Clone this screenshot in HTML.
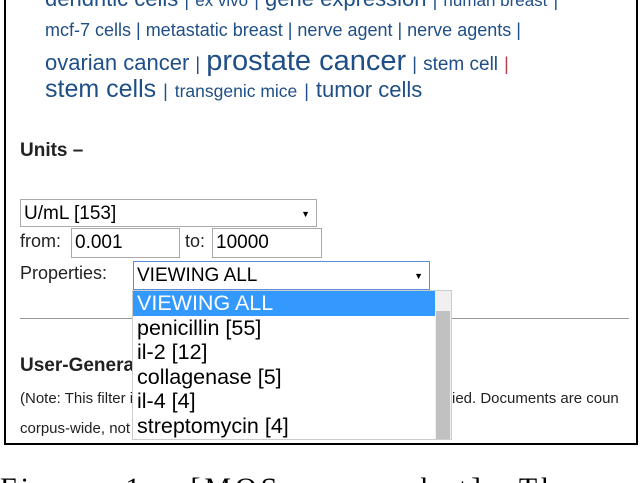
<!DOCTYPE html>
<html><head><meta charset="utf-8"><style>
body{margin:0;width:640px;height:483px;overflow:hidden;background:#fff;position:relative;font-family:"Liberation Sans",Arial,sans-serif}
.a{position:absolute;white-space:nowrap}
.t{color:#1f4f86}
.box{position:absolute;left:4px;top:-5px;width:630px;height:448px;border:2px solid #000;border-top:none;overflow:hidden}
.inp{position:absolute;border:1px solid #aaa;background:#fff;font-size:19px;color:#000;line-height:28px;padding-left:3px;box-sizing:border-box}
</style></head><body>
<div class="box"><div class="a" style="left:446px;top:395px;font-size:15px;color:#222">ied. Documents are coun</div></div>
<div class="a t" style="left:45px;top:-14px;font-size:22px">dendritic cells <span style="font-size:18px">|</span> <span style="font-size:17px">ex vivo</span> <span style="font-size:18px">|</span> gene expression <span style="font-size:18px">|</span> <span style="font-size:17px">human breast</span> <span style="font-size:18px">|</span></div>
<div class="a t" style="left:45px;top:20px;font-size:18px">mcf-7 cells | metastatic breast | nerve agent | nerve agents |</div>
<div class="a t" style="left:45px;top:45px;font-size:22px">ovarian cancer <span style="font-size:18px">|</span> <span style="font-size:29px">prostate cancer</span> <span style="font-size:18px">|</span> <span style="font-size:19px">stem cell</span> <span style="font-size:18px;color:#b04050">|</span></div>
<div class="a t" style="left:45px;top:75px;font-size:25px">stem cells <span style="font-size:18px">|</span> <span style="font-size:17.5px">transgenic mice</span> <span style="font-size:18px">|</span> <span style="font-size:22px">tumor cells</span></div>
<div class="a" style="left:20px;top:140px;font-size:19px;font-weight:bold;color:#222">Units –</div>
<div class="inp" style="left:20px;top:199px;width:297px;height:28px">U/mL [153]<span style="position:absolute;right:6px;top:0;font-size:9px">▼</span></div>
<div class="a" style="left:20px;top:231px;font-size:18px;color:#222">from:</div>
<div class="inp" style="left:71px;top:228px;width:109px;height:30px">0.001</div>
<div class="a" style="left:185px;top:231px;font-size:18px;color:#222">to:</div>
<div class="inp" style="left:212px;top:228px;width:110px;height:30px">10000</div>
<div class="a" style="left:20px;top:263px;font-size:18px;color:#222">Properties:</div>
<div class="inp" style="left:133px;top:261px;width:297px;height:29px;border-color:#5b8fd6">VIEWING ALL<span style="position:absolute;right:6px;top:0;font-size:9px">▼</span></div>
<div class="a" style="left:20px;top:318px;width:609px;height:1px;background:#999"></div>
<div class="a" style="left:20px;top:355px;font-size:19px;font-weight:bold;color:#222">User-Generated</div>
<div class="a" style="left:20px;top:390px;font-size:15px;color:#222">(Note: This filter is</div>
<div class="a" style="left:20px;top:420px;font-size:15px;color:#222">corpus-wide, not</div>
<div class="a" style="left:132px;top:290px;width:320px;height:150px;background:#fff;border:1px solid #ccc;box-sizing:border-box;overflow:hidden;font-size:21.5px;color:#000;line-height:24.5px">
<div style="background:#3399ff;color:#fff;padding-left:4px;width:300px">VIEWING ALL</div>
<div style="padding-left:4px">penicillin [55]</div>
<div style="padding-left:4px">il-2 [12]</div>
<div style="padding-left:4px">collagenase [5]</div>
<div style="padding-left:4px">il-4 [4]</div>
<div style="padding-left:4px">streptomycin [4]</div>
<div style="position:absolute;right:0;top:0;width:16px;height:150px;background:#f0f0f0"></div>
<div style="position:absolute;right:1px;top:20px;width:14px;height:130px;background:#c1c1c1"></div>
</div>
<div style="position:absolute;left:0;top:460px;width:640px;height:23px;overflow:hidden">
<div class="a" style="left:0;top:12px;font-family:'Liberation Serif',serif;font-size:30px;letter-spacing:4px;color:#000">Figure&nbsp;&nbsp;1.&nbsp;&nbsp; [MOS&nbsp; screenshot]&nbsp;&nbsp; The&nbsp; components</div>
</div>
</body></html>
